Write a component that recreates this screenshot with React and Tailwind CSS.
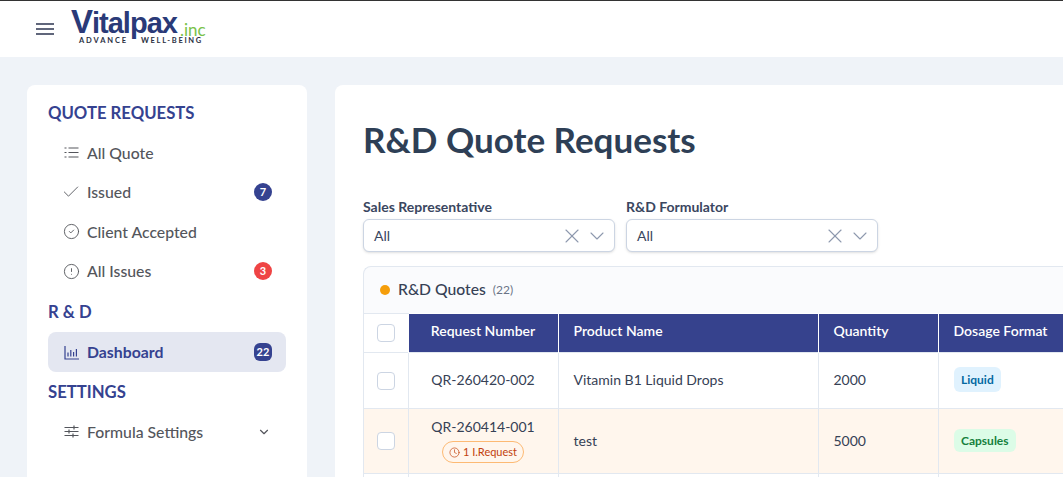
import { CircleCheck, CircleAlert, Check, ChevronDown, X, Clock } from "lucide-react";

function BarsIcon() {
  return (
    <svg width="15" height="15" viewBox="0 0 15 15" fill="none" stroke="currentColor" strokeWidth="1.2">
      <path d="M1 1v13h14" />
      <path d="M4 7.5v4M6.8 5v6.5M9.6 7v4.5M12.4 4v7.5" />
    </svg>
  );
}

function ListIcon() {
  return (
    <svg width="15" height="15" viewBox="0 0 15 15" fill="none" stroke="currentColor" strokeWidth="1.2">
      <path d="M0.5 3h2M0.5 7.5h2M0.5 12h2" />
      <path d="M4.5 3h10M4.5 7.5h10M4.5 12h10" />
    </svg>
  );
}

function SlidersIcon() {
  return (
    <svg width="15" height="15" viewBox="0 0 15 15" fill="none" stroke="currentColor" strokeWidth="1.2">
      <path d="M0.5 3.5h14M0.5 7.5h14M0.5 11.5h14" />
      <path d="M10 1.5v4M5 5.5v4M9 9.5v4" />
    </svg>
  );
}

function NavItem({ icon, label, badge, badgeColor, active, chevron }) {
  return (
    <div className={`flex items-center rounded-lg pl-[16px] pr-[14px] text-[15.8px] ${active ? "h-[40px] bg-[#e4e7f1] font-bold text-[#354290]" : "h-[39.5px] font-medium text-[#54565c]"}`}>
      <span className="flex w-[23px] shrink-0 items-center">{icon}</span>
      <span className="flex-1">{label}</span>
      {badge && (
        <span className={`flex h-[18px] w-[18px] items-center justify-center text-[11px] font-bold text-white ${badgeColor} ${active ? "rounded-md" : "rounded-full"}`}>
          {badge}
        </span>
      )}
      {chevron && <ChevronDown size={14} strokeWidth={2} className="mr-[1px] text-[#54565c]" />}
    </div>
  );
}

function Heading({ children }) {
  return <div className="flex h-[40px] items-center pt-[2px] text-[16.7px] font-bold text-[#354290]">{children}</div>;
}

function Filter({ label }) {
  return (
    <div className="w-[252px]">
      <div className="mb-[3px] text-[14px] font-bold leading-[18px] text-[#3a4660]">{label}</div>
      <div className="flex h-[33px] items-center rounded-md border border-[#ccd5e3] bg-white pl-[10px] pr-[5px] text-[14px] text-[#3a4660] shadow-sm">
        <span className="flex-1 pb-[1px]">All</span>
        <X size={24} strokeWidth={1.1} className="mr-[1px] text-[#8e99ae]" />
        <ChevronDown size={24} strokeWidth={1.1} className="text-[#8e99ae]" />
      </div>
    </div>
  );
}

function Box() {
  return <span className="mx-auto block h-[18px] w-[18px] rounded border border-[#ccd5e3] bg-white" />;
}

const headCell = "border-l border-white bg-[#36428d] px-[15px] pb-[4px] text-[14px] font-semibold text-white";
const cell = "border-l border-t border-[#e2e8f0] px-[15px] pb-[2px] text-[14px] text-[#364155]";

export default function App() {
  return (
    <div className="h-[477px] w-[1063px] overflow-hidden bg-[#eff3f8] font-['Lato',sans-serif]">
      <header className="flex h-[57px] items-center border-t border-[#333] bg-white pl-[36px]">
        <svg width="18" height="14" viewBox="0 0 18 14" stroke="#2c3550" strokeWidth="1.6" className="mr-[17px]">
          <path d="M0 2h18M0 7h18M0 12h18" />
        </svg>
        <div className="relative h-[36px] w-[136px] select-none">
          <span className="absolute left-0 top-[-1px] h-[24px] whitespace-nowrap font-['Liberation_Sans',sans-serif] text-[29px] font-bold leading-[24px] tracking-[-1px] text-[#2a3a78]">
            <span className="text-[33px]">V</span>italpax
          </span>
          <span className="absolute left-[109px] top-[12px] text-[17px] leading-[14px] text-[#79c24a]">.inc</span>
          <span className="absolute left-[8px] top-[26px] whitespace-nowrap text-[7.5px] font-bold leading-[7px] tracking-[1.9px] text-[#2a2f3f]">ADVANCE</span>
          <span className="absolute left-[70px] top-[26px] whitespace-nowrap text-[7.5px] font-bold leading-[7px] tracking-[1.7px] text-[#2a2f3f]">WELL-BEING</span>
        </div>
      </header>

      <div className="flex gap-[28px] pl-[27px] pt-[28px]">
        <aside className="h-[400px] w-[280px] shrink-0 rounded-lg bg-white pl-[21px] pr-[21px] pt-[8px]">
          <Heading>QUOTE REQUESTS</Heading>
          <div className="mb-[1px]">
            <NavItem icon={<ListIcon />} label="All Quote" />
            <NavItem icon={<Check size={20} strokeWidth={1.1} className="-ml-[3px] shrink-0" />} label="Issued" badge="7" badgeColor="bg-[#354290]" />
            <NavItem icon={<CircleCheck size={17} strokeWidth={1.3} className="-ml-[1.5px] shrink-0" />} label="Client Accepted" />
            <NavItem icon={<CircleAlert size={17} strokeWidth={1.3} className="-ml-[1.5px] shrink-0" />} label="All Issues" badge="3" badgeColor="bg-[#ef4444]" />
          </div>
          <Heading>R &amp; D</Heading>
          <NavItem active icon={<BarsIcon />} label="Dashboard" badge="22" badgeColor="bg-[#354290]" />
          <Heading>SETTINGS</Heading>
          <NavItem icon={<SlidersIcon />} label="Formula Settings" chevron />
        </aside>

        <main className="h-[400px] w-[800px] shrink-0 rounded-lg bg-white pl-[28px] pt-[31px]">
          <h1 className="text-[35px] font-bold leading-[46px] text-[#2e3f56]">R&amp;D Quote Requests</h1>
          <div className="mt-[36px] flex gap-[11px]">
            <Filter label="Sales Representative" />
            <Filter label="R&D Formulator" />
          </div>

          <div className="mt-[14px] rounded-tl-lg border-l border-t border-[#e2e8f0] bg-[#fafbfd]">
            <div className="flex h-[46px] items-center pl-[16px]">
              <span className="mr-[8px] h-[10px] w-[10px] rounded-full bg-[#f59e0b]" />
              <span className="text-[15.7px] font-medium text-[#364155]">R&amp;D Quotes</span>
              <span className="ml-[7px] text-[12px] text-[#6b7487]">(22)</span>
            </div>
            <table className="w-[800px] table-fixed border-collapse bg-white">
              <colgroup>
                <col className="w-[44px]" />
                <col className="w-[150px]" />
                <col className="w-[260px]" />
                <col className="w-[120px]" />
                <col />
              </colgroup>
              <thead>
                <tr className="h-[39px]">
                  <th className="border-t border-[#e2e8f0] bg-white pb-[1px] pl-[1px]"><Box /></th>
                  <th className={`${headCell} text-center`}>Request Number</th>
                  <th className={`${headCell} text-left`}>Product Name</th>
                  <th className={`${headCell} text-left`}>Quantity</th>
                  <th className={`${headCell} text-left`}>Dosage Format</th>
                </tr>
              </thead>
              <tbody>
                <tr className="h-[56px]">
                  <td className="border-t border-[#e2e8f0] pl-[1px]"><Box /></td>
                  <td className={`${cell} text-center`}>QR-260420-002</td>
                  <td className={cell}>Vitamin B1 Liquid Drops</td>
                  <td className={cell}>2000</td>
                  <td className={cell}>
                    <span className="inline-block rounded-md bg-[#e0f2fe] px-[7.5px] py-[4px] text-[12px] font-bold leading-[17px] text-[#0369a1]">Liquid</span>
                  </td>
                </tr>
                <tr className="h-[65px] bg-[#fff6ed]">
                  <td className="border-t border-[#e2e8f0] pl-[1px]"><Box /></td>
                  <td className={`${cell} text-center`}>
                    <div className="leading-[20px]">QR-260414-001</div>
                    <span className="mt-[4px] inline-flex h-[22px] items-center gap-[3px] rounded-full border border-[#fdba74] px-[6px] text-[11px] text-[#c2410c]">
                      <Clock size={11} strokeWidth={1.5} />1 I.Request
                    </span>
                  </td>
                  <td className={cell}>test</td>
                  <td className={cell}>5000</td>
                  <td className={cell}>
                    <span className="inline-block rounded-md bg-[#dcfce7] px-[7.5px] py-[3px] text-[12px] font-bold leading-[17px] text-[#15803d]">Capsules</span>
                  </td>
                </tr>
                <tr className="h-[10px]">
                  <td className="border-t border-[#e2e8f0]" />
                  <td className={cell} />
                  <td className={cell} />
                  <td className={cell} />
                  <td className={cell} />
                </tr>
              </tbody>
            </table>
          </div>
        </main>
      </div>
    </div>
  );
}
